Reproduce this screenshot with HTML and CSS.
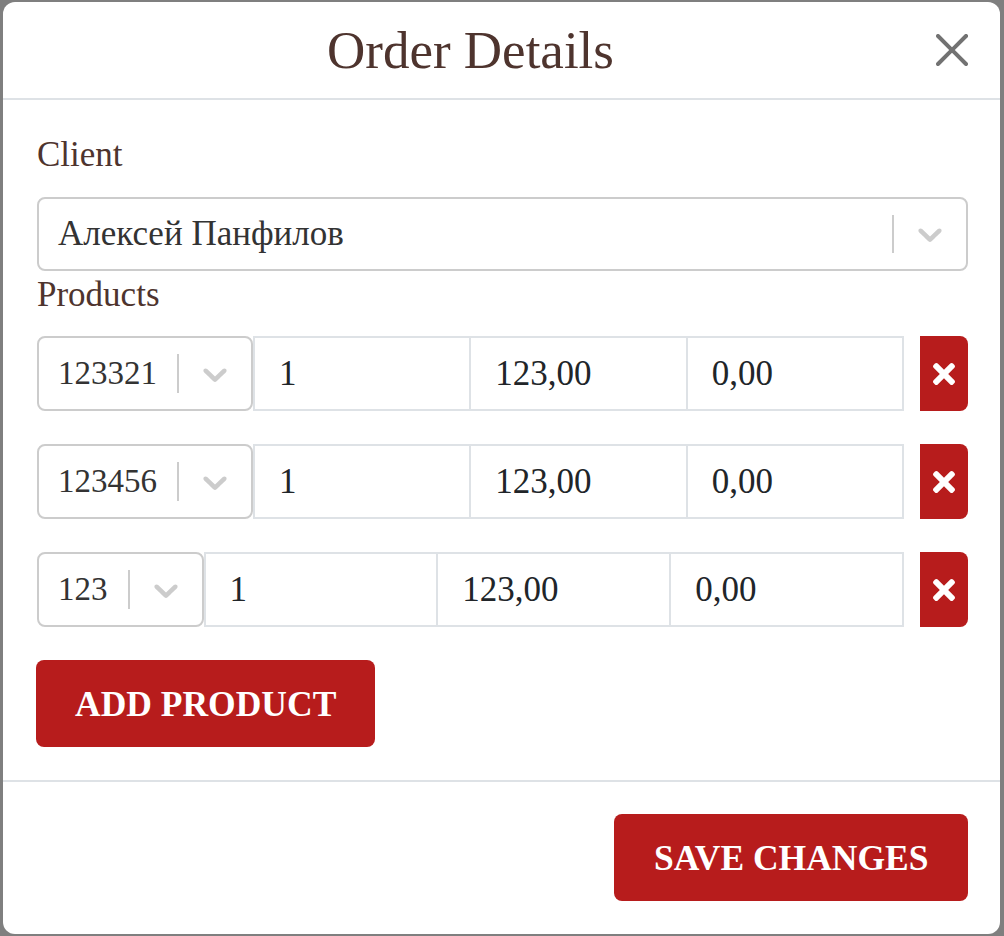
FILE: index.html
```html
<!DOCTYPE html>
<html lang="en">
<head>
  <meta charset="UTF-8" />
  <meta name="viewport" content="width=device-width, initial-scale=1" />
  <title>Order Details</title>
  <link rel="stylesheet" href="styles.css">
</head>
<body>

  <div class="modal">
    <div class="modal-header">
      <h2 class="modal-title">Order Details</h2>
      <button class="btn-close" type="button" aria-label="Close">
        <svg viewBox="0 0 16 16" width="32" height="32"><path d="M.293.293a1 1 0 0 1 1.414 0L8 6.586 14.293.293a1 1 0 1 1 1.414 1.414L9.414 8l6.293 6.293a1 1 0 0 1-1.414 1.414L8 9.414l-6.293 6.293a1 1 0 0 1-1.414-1.414L6.586 8 .293 1.707a1 1 0 0 1 0-1.414z"/></svg>
      </button>
    </div>

    <div class="modal-body">
      <label class="form-label">Client</label>
      <div class="select client-select">
        <span class="select-value">Алексей Панфилов</span>
        <span class="select-sep"></span>
        <span class="select-arrow">
          <svg viewBox="0 0 20 20" width="40" height="40"><path d="M4.516 7.548c0.436-0.446 1.043-0.481 1.576 0l3.908 3.747 3.908-3.747c0.533-0.481 1.141-0.446 1.574 0 0.436 0.445 0.408 1.197 0 1.615-0.406 0.418-4.695 4.502-4.695 4.502-0.217 0.223-0.502 0.335-0.787 0.335s-0.57-0.112-0.789-0.335c0 0-4.287-4.084-4.695-4.502s-0.436-1.17 0-1.615z"/></svg>
        </span>
      </div>

      <label class="form-label products-label">Products</label>

      <div class="product-row">
        <div class="select">
          <span class="select-value">123321</span>
          <span class="select-sep"></span>
          <span class="select-arrow">
            <svg viewBox="0 0 20 20" width="40" height="40"><path d="M4.516 7.548c0.436-0.446 1.043-0.481 1.576 0l3.908 3.747 3.908-3.747c0.533-0.481 1.141-0.446 1.574 0 0.436 0.445 0.408 1.197 0 1.615-0.406 0.418-4.695 4.502-4.695 4.502-0.217 0.223-0.502 0.335-0.787 0.335s-0.57-0.112-0.789-0.335c0 0-4.287-4.084-4.695-4.502s-0.436-1.17 0-1.615z"/></svg>
          </span>
        </div>
        <div class="field">1</div>
        <div class="field">123,00</div>
        <div class="field">0,00</div>
        <button class="btn-remove" type="button" aria-label="Remove">
          <svg viewBox="0 80 352 352" width="22" height="22"><path d="M242.72 256l100.07-100.07c12.28-12.28 12.28-32.19 0-44.48l-22.24-22.24c-12.28-12.28-32.19-12.28-44.48 0L176 189.28 75.93 89.21c-12.28-12.28-32.19-12.28-44.48 0L9.21 111.45c-12.28 12.28-12.28 32.19 0 44.48L109.28 256 9.21 356.07c-12.28 12.28-12.28 32.19 0 44.48l22.24 22.24c12.28 12.28 32.2 12.28 44.48 0L176 322.72l100.07 100.07c12.28 12.28 32.2 12.28 44.48 0l22.24-22.24c12.28-12.28 12.28-32.19 0-44.48L242.72 256z"/></svg>
        </button>
      </div>

      <div class="product-row">
        <div class="select">
          <span class="select-value">123456</span>
          <span class="select-sep"></span>
          <span class="select-arrow">
            <svg viewBox="0 0 20 20" width="40" height="40"><path d="M4.516 7.548c0.436-0.446 1.043-0.481 1.576 0l3.908 3.747 3.908-3.747c0.533-0.481 1.141-0.446 1.574 0 0.436 0.445 0.408 1.197 0 1.615-0.406 0.418-4.695 4.502-4.695 4.502-0.217 0.223-0.502 0.335-0.787 0.335s-0.57-0.112-0.789-0.335c0 0-4.287-4.084-4.695-4.502s-0.436-1.17 0-1.615z"/></svg>
          </span>
        </div>
        <div class="field">1</div>
        <div class="field">123,00</div>
        <div class="field">0,00</div>
        <button class="btn-remove" type="button" aria-label="Remove">
          <svg viewBox="0 80 352 352" width="22" height="22"><path d="M242.72 256l100.07-100.07c12.28-12.28 12.28-32.19 0-44.48l-22.24-22.24c-12.28-12.28-32.19-12.28-44.48 0L176 189.28 75.93 89.21c-12.28-12.28-32.19-12.28-44.48 0L9.21 111.45c-12.28 12.28-12.28 32.19 0 44.48L109.28 256 9.21 356.07c-12.28 12.28-12.28 32.19 0 44.48l22.24 22.24c12.28 12.28 32.2 12.28 44.48 0L176 322.72l100.07 100.07c12.28 12.28 32.2 12.28 44.48 0l22.24-22.24c12.28-12.28 12.28-32.19 0-44.48L242.72 256z"/></svg>
        </button>
      </div>

      <div class="product-row">
        <div class="select">
          <span class="select-value">123</span>
          <span class="select-sep"></span>
          <span class="select-arrow">
            <svg viewBox="0 0 20 20" width="40" height="40"><path d="M4.516 7.548c0.436-0.446 1.043-0.481 1.576 0l3.908 3.747 3.908-3.747c0.533-0.481 1.141-0.446 1.574 0 0.436 0.445 0.408 1.197 0 1.615-0.406 0.418-4.695 4.502-4.695 4.502-0.217 0.223-0.502 0.335-0.787 0.335s-0.57-0.112-0.789-0.335c0 0-4.287-4.084-4.695-4.502s-0.436-1.17 0-1.615z"/></svg>
          </span>
        </div>
        <div class="field">1</div>
        <div class="field">123,00</div>
        <div class="field">0,00</div>
        <button class="btn-remove" type="button" aria-label="Remove">
          <svg viewBox="0 80 352 352" width="22" height="22"><path d="M242.72 256l100.07-100.07c12.28-12.28 12.28-32.19 0-44.48l-22.24-22.24c-12.28-12.28-32.19-12.28-44.48 0L176 189.28 75.93 89.21c-12.28-12.28-32.19-12.28-44.48 0L9.21 111.45c-12.28 12.28-12.28 32.19 0 44.48L109.28 256 9.21 356.07c-12.28 12.28-12.28 32.19 0 44.48l22.24 22.24c12.28 12.28 32.2 12.28 44.48 0L176 322.72l100.07 100.07c12.28 12.28 32.2 12.28 44.48 0l22.24-22.24c12.28-12.28 12.28-32.19 0-44.48L242.72 256z"/></svg>
        </button>
      </div>

      <button class="btn-red btn-add" type="button">ADD PRODUCT</button>
    </div>

    <div class="modal-footer">
      <button class="btn-red" type="button">SAVE CHANGES</button>
    </div>
  </div>

</body>
</html>
```

FILE: styles.css
```css
body {
  margin: 0;
  padding: 2px 4px 2px 3px;
  height: 936px;
  box-sizing: border-box;
  background: #7f7f7f;
  font-family: "Liberation Serif", "DejaVu Serif", serif;
  overflow: hidden;
}

.modal {
  background: white;
  border-radius: 12px;
  height: 932px;
  display: flex;
  flex-direction: column;
}

.modal-header {
  height: 96px;
  display: flex;
  align-items: center;
  padding: 0 32px 0 34px;
  border-bottom: 2px solid #dee2e6;
}

.modal-title {
  flex: 1;
  margin: 0;
  text-align: center;
  font-size: 53px;
  font-weight: normal;
  line-height: 52px;
  color: #4e342e;
}

.btn-close {
  width: 32px;
  height: 32px;
  margin-left: 32px;
  padding: 0;
  border: none;
  background: none;
  display: flex;
  cursor: pointer;
}

.btn-close svg {
  fill: #000;
  opacity: 0.55;
}

.modal-body {
  padding: 35px 32px 33px 34px;
  border-bottom: 2px solid #dee2e6;
}

.form-label {
  display: block;
  font-size: 35px;
  line-height: 40px;
  color: #4e342e;
  margin-bottom: 22px;
}

.products-label {
  margin-top: 4px;
  margin-bottom: 21px;
}

.select {
  display: flex;
  align-items: center;
  height: 75px;
  box-sizing: border-box;
  border: 2px solid #ccc;
  border-radius: 8px;
  background: white;
  flex-shrink: 0;
}

.client-select {
  height: 74px;
}

.select-value {
  flex: 1;
  padding: 0 20px 0 19px;
  font-size: 33px;
  color: #333;
  white-space: nowrap;
}

.client-select .select-value {
  font-size: 35px;
}

.select-sep {
  width: 2px;
  align-self: stretch;
  margin: 16px 0;
  background: #ccc;
}

.select-arrow {
  display: flex;
  padding: 0 16px;
}

.select-arrow svg {
  fill: #ccc;
}

.product-row {
  display: flex;
  align-items: stretch;
  height: 75px;
  margin-bottom: 33px;
}

.field {
  flex: 1;
  min-width: 0;
  display: flex;
  align-items: center;
  box-sizing: border-box;
  padding: 0 24px;
  border: 2px solid #dee2e6;
  margin-left: -2px;
  font-size: 35px;
  color: #212529;
}

.select + .field {
  margin-left: 0;
}

.btn-remove {
  width: 48px;
  margin-left: 16px;
  padding: 0;
  border: none;
  border-radius: 0 8px 8px 0;
  background: #b71c1c;
  display: flex;
  align-items: center;
  justify-content: center;
  cursor: pointer;
}

.btn-remove svg {
  fill: white;
}

.btn-red {
  height: 87px;
  padding: 0 39px;
  border: none;
  border-radius: 8px;
  background: #b71c1c;
  color: white;
  font-family: "Liberation Serif", "DejaVu Serif", serif;
  font-size: 35.5px;
  font-weight: bold;
  cursor: pointer;
}

.btn-add {
  margin-left: -1px;
}

.modal-footer {
  display: flex;
  justify-content: flex-end;
  padding: 32px 32px 0 0;
}

.modal-footer .btn-red {
  padding: 0 39.5px;
}
```
